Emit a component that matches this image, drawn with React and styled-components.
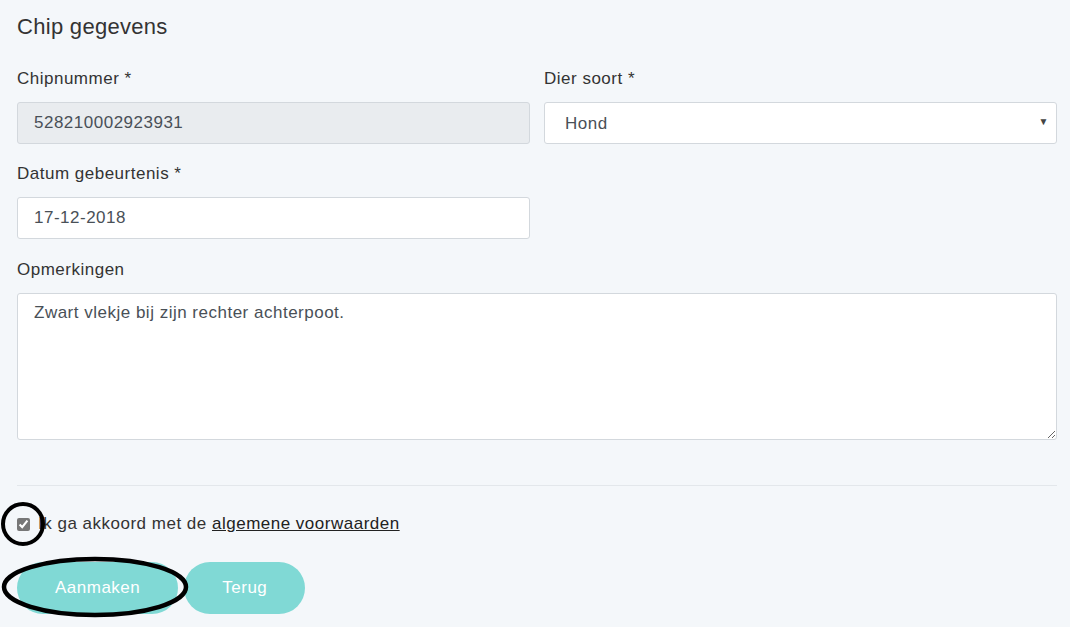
import React, { useState } from 'react';
import styled, { createGlobalStyle } from 'styled-components';

const GlobalStyle = createGlobalStyle`
  html, body {
    margin: 0;
    padding: 0;
    background: #f4f7fa;
    font-family: 'Liberation Sans', Arial, sans-serif;
  }
`;

const Page = styled.div`
  position: relative;
  width: 1070px;
  height: 627px;
  box-sizing: border-box;
  padding: 15px 13px 0 17px;
  overflow: hidden;
  background: #f4f7fa;
  letter-spacing: 0.5px;
`;

const Title = styled.h2`
  margin: 0 0 30px;
  font-size: 22px;
  line-height: 24px;
  font-weight: 400;
  letter-spacing: 0.3px;
  color: #333;
`;

const Row = styled.div`
  display: grid;
  grid-template-columns: 1fr 1fr;
  column-gap: 14px;
`;

const Group = styled.div`
  margin-bottom: ${(p) => p.$mb || 20}px;
`;

const Label = styled.label`
  display: block;
  font-size: 17px;
  line-height: 20px;
  color: #333;
  margin-bottom: 13px;
`;

const Input = styled.input`
  display: block;
  width: 100%;
  box-sizing: border-box;
  height: 42px;
  padding: 0 16px;
  font-family: inherit;
  font-size: 17px;
  letter-spacing: 0.5px;
  color: #495057;
  background: ${(p) => (p.disabled ? '#e9ecef' : '#fff')};
  border: 1px solid #d3d8dd;
  border-radius: 3px;
  outline: none;
`;

const SelectWrap = styled.div`
  position: relative;
`;

const Select = styled.select`
  display: block;
  width: 100%;
  box-sizing: border-box;
  height: 42px;
  padding: 0 20px;
  font-family: inherit;
  font-size: 17px;
  letter-spacing: 0.5px;
  color: #495057;
  background: #fff;
  border: 1px solid #d3d8dd;
  border-radius: 3px;
  appearance: none;
  outline: none;
`;

const Caret = styled.span`
  position: absolute;
  right: 8px;
  top: 14px;
  font-size: 10px;
  color: #444;
  pointer-events: none;
`;

const TextArea = styled.textarea`
  display: block;
  width: 100%;
  box-sizing: border-box;
  height: 147px;
  padding: 9px 16px;
  font-family: inherit;
  font-size: 17px;
  letter-spacing: 0.5px;
  line-height: 20px;
  color: #495057;
  background: #fff;
  border: 1px solid #d3d8dd;
  border-radius: 3px;
  resize: vertical;
  outline: none;
`;

const Divider = styled.hr`
  margin: 45px 0 0;
  border: 0;
  border-top: 1px solid #e3e7eb;
`;

const CheckRow = styled.label`
  display: flex;
  align-items: center;
  gap: 8px;
  margin-top: 28px;
  font-size: 17px;
  line-height: 20px;
  color: #333;
`;

const Check = styled.input`
  width: 13px;
  height: 13px;
  margin: 0;
  accent-color: #777;
`;

const TermsLink = styled.a`
  color: #222;
  text-decoration: underline;
`;

const Buttons = styled.div`
  display: flex;
  gap: 6px;
  margin-top: 28px;
`;

const Button = styled.button`
  height: 52px;
  padding: 0 38px;
  border: 0;
  border-radius: 26px;
  background: #80d9d5;
  color: #fff;
  font-family: inherit;
  font-size: 17px;
  letter-spacing: 0.5px;
  cursor: pointer;
`;

const Annotation = styled.svg`
  position: absolute;
  left: 0;
  top: 0;
  pointer-events: none;
`;

export default function App() {
  const [agreed, setAgreed] = useState(true);

  return (
    <>
      <GlobalStyle />
      <Page>
        <Title>Chip gegevens</Title>
        <Row>
          <Group>
            <Label>Chipnummer *</Label>
            <Input disabled value="528210002923931" readOnly />
          </Group>
          <Group>
            <Label>Dier soort *</Label>
            <SelectWrap>
              <Select defaultValue="hond">
                <option value="hond">Hond</option>
                <option value="kat">Kat</option>
              </Select>
              <Caret>▼</Caret>
            </SelectWrap>
          </Group>
        </Row>
        <Row>
          <Group $mb={21}>
            <Label>Datum gebeurtenis *</Label>
            <Input defaultValue="17-12-2018" />
          </Group>
        </Row>
        <Group $mb={0}>
          <Label>Opmerkingen</Label>
          <TextArea defaultValue="Zwart vlekje bij zijn rechter achterpoot." />
        </Group>
        <Divider />
        <CheckRow>
          <Check
            type="checkbox"
            checked={agreed}
            onChange={(e) => setAgreed(e.target.checked)}
          />
          <span>
            Ik ga akkoord met de <TermsLink href="#">algemene voorwaarden</TermsLink>
          </span>
        </CheckRow>
        <Buttons>
          <Button>Aanmaken</Button>
          <Button>Terug</Button>
        </Buttons>
        <Annotation width="1070" height="627">
          <ellipse cx="23" cy="524" rx="20" ry="20" fill="none" stroke="#000" strokeWidth="4" />
          <ellipse cx="95" cy="587" rx="91" ry="28" fill="none" stroke="#000" strokeWidth="4.5" />
        </Annotation>
      </Page>
    </>
  );
}
